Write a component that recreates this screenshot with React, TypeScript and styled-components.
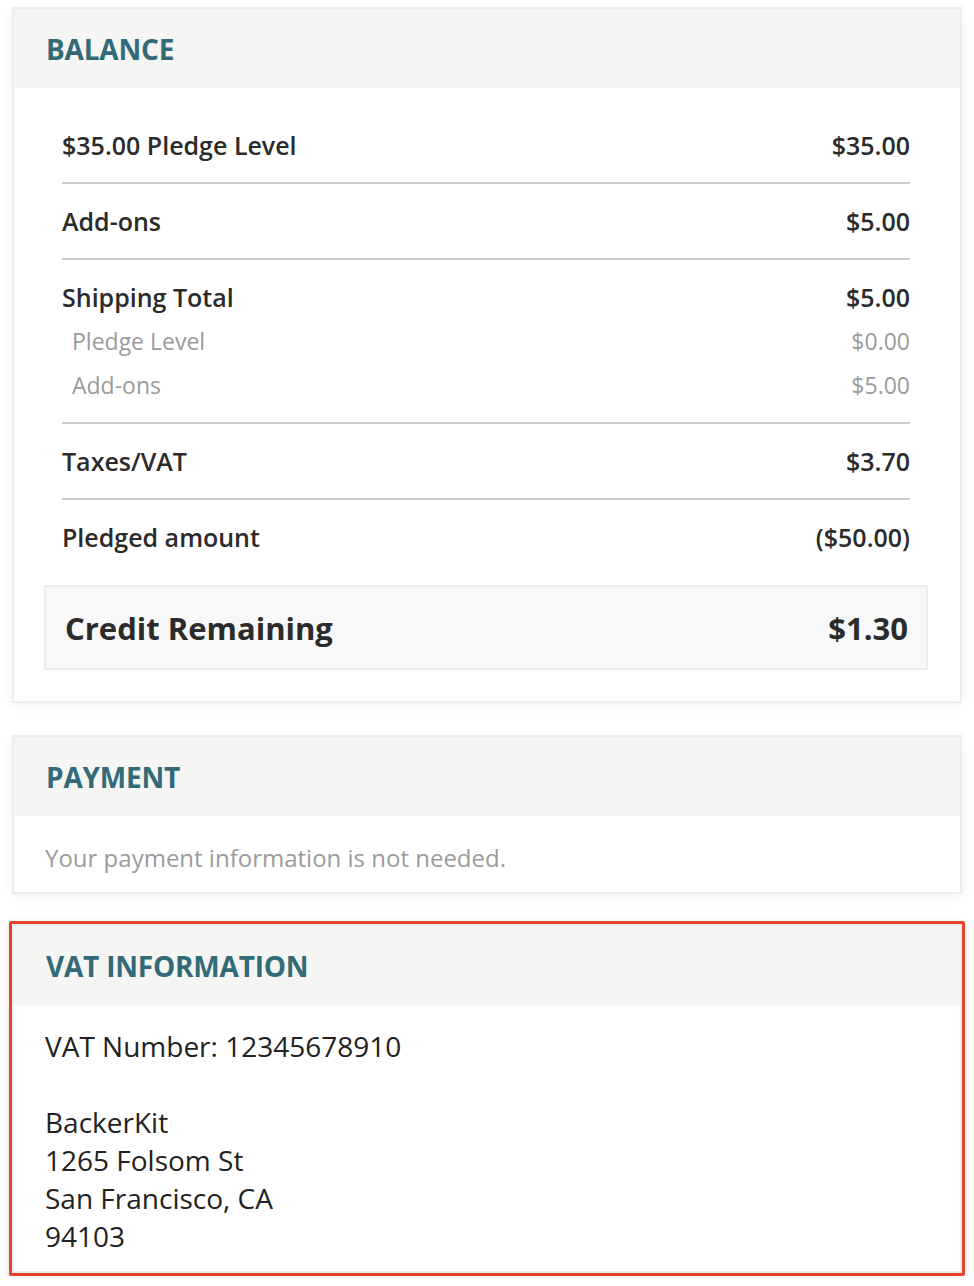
import styled, { createGlobalStyle } from "styled-components";

const GlobalStyle = createGlobalStyle`
  body {
    margin: 0;
    background: #ffffff;
    font-family: "Open Sans", "Noto Sans", sans-serif;
    color: #2b2b2b;
  }
`;

type Line = { label: string; amount: string };

const balanceRows: Line[] = [
  { label: "$35.00 Pledge Level", amount: "$35.00" },
  { label: "Add-ons", amount: "$5.00" },
];

const shippingRows: Line[] = [
  { label: "Pledge Level", amount: "$0.00" },
  { label: "Add-ons", amount: "$5.00" },
];

const App = () => {
  return (
    <>
      <GlobalStyle />
      <Page>
        <Card>
          <CardHeader>Balance</CardHeader>
          <BalanceBody>
            {balanceRows.map((row) => (
              <Row key={row.label} $divider>
                <LineItem>
                  <span>{row.label}</span>
                  <span>{row.amount}</span>
                </LineItem>
              </Row>
            ))}
            <Row $divider>
              <LineItem>
                <span>Shipping Total</span>
                <span>$5.00</span>
              </LineItem>
              {shippingRows.map((row) => (
                <SubItem key={row.label}>
                  <span>{row.label}</span>
                  <span>{row.amount}</span>
                </SubItem>
              ))}
            </Row>
            <Row $divider>
              <LineItem>
                <span>Taxes/VAT</span>
                <span>$3.70</span>
              </LineItem>
            </Row>
            <Row>
              <LineItem>
                <span>Pledged amount</span>
                <span>($50.00)</span>
              </LineItem>
            </Row>
            <TotalBox>
              <span>Credit Remaining</span>
              <span>$1.30</span>
            </TotalBox>
          </BalanceBody>
        </Card>

        <Card>
          <CardHeader>Payment</CardHeader>
          <MutedBody>Your payment information is not needed.</MutedBody>
        </Card>

        <Highlight>
          <Card>
            <CardHeader>VAT Information</CardHeader>
            <AddressBody>
              <p>VAT Number: 12345678910</p>
              <p>
                BackerKit
                <br />
                1265 Folsom St
                <br />
                San Francisco, CA
                <br />
                94103
              </p>
            </AddressBody>
          </Card>
        </Highlight>
      </Page>
    </>
  );
};

export default App;

const Page = styled.div`
  display: flex;
  flex-direction: column;
  gap: 32px;
  padding: 7px 12px 0 12px;
  width: 950px;
`;

const Card = styled.section`
  background: #fff;
  border: 2px solid #ededed;
  box-shadow: 0 3px 12px rgba(0, 0, 0, 0.05);
`;

const CardHeader = styled.h2`
  display: flex;
  align-items: center;
  height: 79px;
  margin: 0;
  padding: 0 32px;
  background: #f5f5f3;
  color: #336a78;
  font-size: 28px;
  font-weight: 700;
  text-transform: uppercase;
  letter-spacing: -0.2px;
`;

const BalanceBody = styled.div`
  padding: 20px 32px 31px 30px;
`;

const Row = styled.div<{ $divider?: boolean }>`
  margin: 0 18px;
  padding: 20px 0;
  border-bottom: ${({ $divider }) => ($divider ? "2px solid #cccccc" : "none")};
`;

const LineItem = styled.div`
  display: flex;
  justify-content: space-between;
  font-size: 25px;
  font-weight: 600;
  line-height: 34px;
  color: #2b2b2b;
`;

const SubItem = styled.div`
  display: flex;
  justify-content: space-between;
  margin-top: 10px;
  padding-left: 10px;
  font-size: 23px;
  line-height: 34px;
  color: #9b9b9b;
`;

const TotalBox = styled.div`
  display: flex;
  justify-content: space-between;
  align-items: center;
  margin-top: 11px;
  height: 81px;
  padding: 0 18px 0 19px;
  background: #f8f8f8;
  border: 2px solid #ededed;
  font-size: 31px;
  font-weight: 700;
  color: #2b2b2b;
`;

const MutedBody = styled.p`
  margin: 0;
  padding: 26px 31px 18px;
  font-size: 24px;
  line-height: 32px;
  color: #9b9b9b;
`;

const Highlight = styled.div`
  margin: -5px -3px 0;
  border: 3px solid #e4432c;
  border-radius: 2px;
  box-shadow: 0 2px 6px rgba(0, 0, 0, 0.15);

  ${Card} {
    box-shadow: none;
  }
`;

const AddressBody = styled.div`
  padding: 22px 31px 16px;
  font-size: 28px;
  line-height: 38px;
  color: #222;

  p {
    margin: 0 0 38px;
  }

  p:last-child {
    margin: 0;
  }
`;
